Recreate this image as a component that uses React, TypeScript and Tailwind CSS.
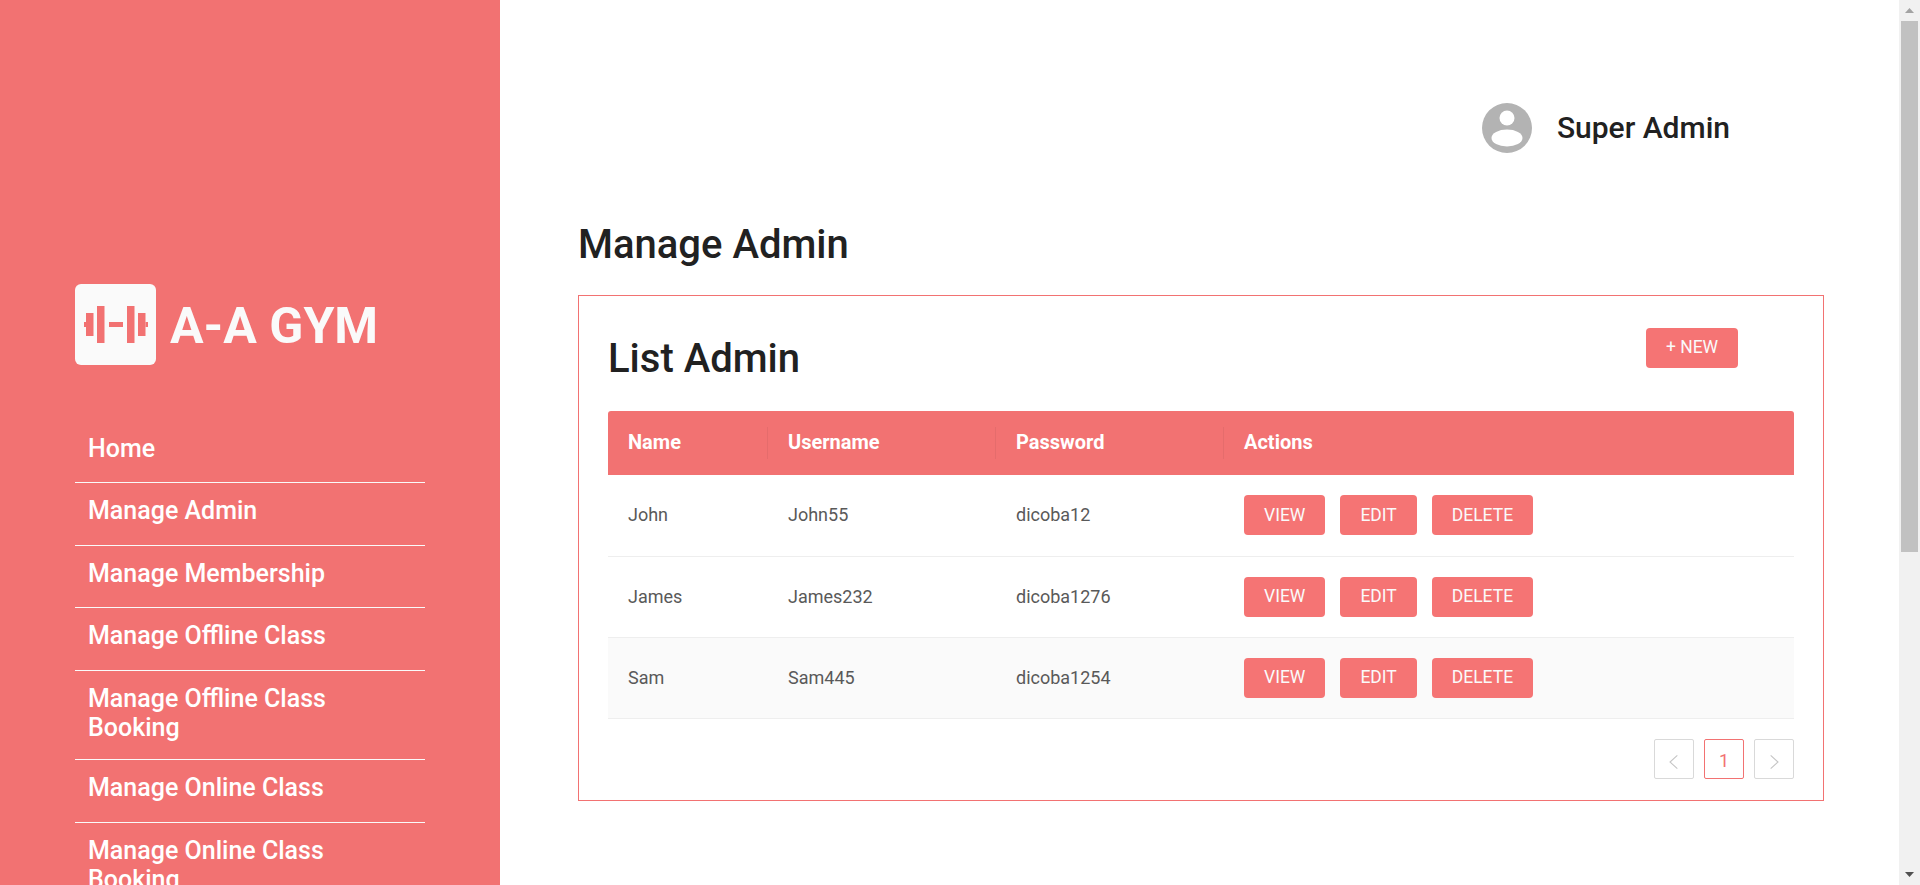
const navItems = [
  'Home',
  'Manage Admin',
  'Manage Membership',
  'Manage Offline Class',
  'Manage Offline Class Booking',
  'Manage Online Class',
  'Manage Online Class Booking',
]

const admins = [
  { name: 'John', username: 'John55', password: 'dicoba12' },
  { name: 'James', username: 'James232', password: 'dicoba1276' },
  { name: 'Sam', username: 'Sam445', password: 'dicoba1254' },
]

function ActionButton({ label }: { label: string }) {
  return (
    <button
      type="button"
      className="h-10 px-5 rounded-[4px] bg-[#f57474] text-[17.5px] leading-none text-[#fafafa]"
    >
      {label}
    </button>
  )
}

function Logo() {
  return (
    <div className="w-[81px] h-[81px] shrink-0 rounded-md bg-[#fafafa]">
      <svg viewBox="0 0 81 81" className="w-full h-full" fill="#f27272">
        <rect x="9" y="38" width="2.5" height="5" />
        <rect x="11" y="29" width="7.5" height="23" />
        <rect x="22" y="22" width="7.5" height="37" />
        <rect x="34" y="38" width="14" height="5" />
        <rect x="52" y="22" width="7.5" height="37" />
        <rect x="63" y="29" width="7.5" height="23" />
        <rect x="70.5" y="38" width="2.5" height="5" />
      </svg>
    </div>
  )
}

function Avatar() {
  return (
    <svg viewBox="0 0 50 50" className="w-[50px] h-[50px] shrink-0">
      <circle cx="25" cy="25" r="25" fill="#b3b3b3" />
      <circle cx="25" cy="15" r="7.5" fill="#fff" />
      <ellipse cx="25" cy="35" rx="15.5" ry="8.5" fill="#fff" />
    </svg>
  )
}

// the page's scrollbar, drawn because the headless window doesn't paint one
function Scrollbar() {
  return (
    <div className="fixed right-0 top-0 flex h-screen w-[21px] flex-col items-center bg-[#f1f1f1]">
      <div className="flex h-[21px] w-full shrink-0 items-center justify-center">
        <svg viewBox="0 0 9 5" className="h-[5px] w-[9px]" fill="#a3a3a3">
          <path d="M4.5 0 9 5H0z" />
        </svg>
      </div>
      <div className="h-[531px] w-[17px] bg-[#c1c1c1]" />
      <div className="mt-auto flex h-[21px] w-full shrink-0 items-center justify-center">
        <svg viewBox="0 0 9 5" className="h-[5px] w-[9px]" fill="#505050">
          <path d="M0 0h9L4.5 5z" />
        </svg>
      </div>
    </div>
  )
}

export default function App() {
  return (
    <div className="flex min-h-[1421px] bg-white pr-[21px] font-['Roboto',sans-serif] text-[#212121]">
      <aside className="w-[500px] shrink-0 bg-[#f27272] px-[75px] pt-[284px]">
        <div className="flex items-center gap-[14px]">
          <Logo />
          <span className="pt-[2px] text-[50px] font-bold leading-none text-[#fafafa]">A-A GYM</span>
        </div>
        <nav className="mt-[56px]">
          {navItems.map((item) => (
            <a
              key={item}
              href="#"
              className="block min-h-[62.4px] border-b border-[#fafafa] px-[13px] pt-[13px] pb-[17px] text-[25px] font-medium leading-[29.3px] text-white last:border-b-0"
            >
              {item}
            </a>
          ))}
        </nav>
      </aside>

      <main className="flex-1 pl-[78px] pr-[75px] pt-[103px]">
        <div className="flex items-center justify-end gap-[25px] pr-[94px]">
          <Avatar />
          <span className="text-[30px] font-medium leading-none">Super Admin</span>
        </div>

        <h1 className="mt-[68px] text-[40px] font-medium leading-[48px]">Manage Admin</h1>

        <section className="mt-[26px] border border-[#f27272] px-[29px] pt-[32px] pb-[21px]">
          <div className="flex items-start justify-between pr-[56px]">
            <h2 className="mt-[5px] text-[40px] font-medium leading-[52px]">List Admin</h2>
            <button
              type="button"
              className="h-10 w-[92px] rounded-[4px] bg-[#f57474] text-[17.5px] leading-none text-[#fafafa]"
            >
              + NEW
            </button>
          </div>

          <table className="mt-[26px] w-full table-fixed border-collapse text-left text-lg">
            <colgroup>
              <col className="w-[160px]" />
              <col className="w-[228px]" />
              <col className="w-[228px]" />
              <col />
            </colgroup>
            <thead>
              <tr className="h-[64px] text-white">
                {['Name', 'Username', 'Password', 'Actions'].map((title, i) => (
                  <th
                    key={title}
                    className={`relative bg-[#f27272] px-5 pb-[3px] text-xl font-bold ${i === 0 ? 'rounded-tl-[3px]' : ''} ${i === 3 ? 'rounded-tr-[3px]' : ''}`}
                  >
                    {title}
                    {i < 3 && (
                      <span className="absolute right-0 top-1/2 h-8 w-px -translate-y-1/2 bg-black/5" />
                    )}
                  </th>
                ))}
              </tr>
            </thead>
            <tbody className="text-[#595959]">
              {admins.map((admin, i) => (
                <tr
                  key={admin.name}
                  className={`h-[81px] border-b border-[#eeeeee] ${i === 2 ? 'bg-[#fafafa]' : ''}`}
                >
                  <td className="px-5">{admin.name}</td>
                  <td className="px-5">{admin.username}</td>
                  <td className="px-5">{admin.password}</td>
                  <td className="px-5">
                    <div className="flex gap-[15px]">
                      <ActionButton label="VIEW" />
                      <ActionButton label="EDIT" />
                      <ActionButton label="DELETE" />
                    </div>
                  </td>
                </tr>
              ))}
            </tbody>
          </table>

          <div className="mt-5 flex justify-end gap-[10px]">
            <button type="button" className="flex h-10 w-10 items-center justify-center rounded-[2px] border border-[#d9d9d9] text-[#c4c4c4]">
              <svg viewBox="0 0 12 12" className="mt-[6px] h-4 w-4" fill="none" stroke="currentColor" strokeWidth="0.8">
                <path d="M8.5 1 3 6l5.5 5" />
              </svg>
            </button>
            <button type="button" className="flex h-10 w-10 items-center justify-center rounded-[2px] border border-[#f27272] pt-1 text-lg text-[#f27272]">
              1
            </button>
            <button type="button" className="flex h-10 w-10 items-center justify-center rounded-[2px] border border-[#d9d9d9] text-[#c4c4c4]">
              <svg viewBox="0 0 12 12" className="mt-[6px] h-4 w-4" fill="none" stroke="currentColor" strokeWidth="0.8">
                <path d="M3.5 1 9 6l-5.5 5" />
              </svg>
            </button>
          </div>
        </section>
      </main>

      <Scrollbar />
    </div>
  )
}
